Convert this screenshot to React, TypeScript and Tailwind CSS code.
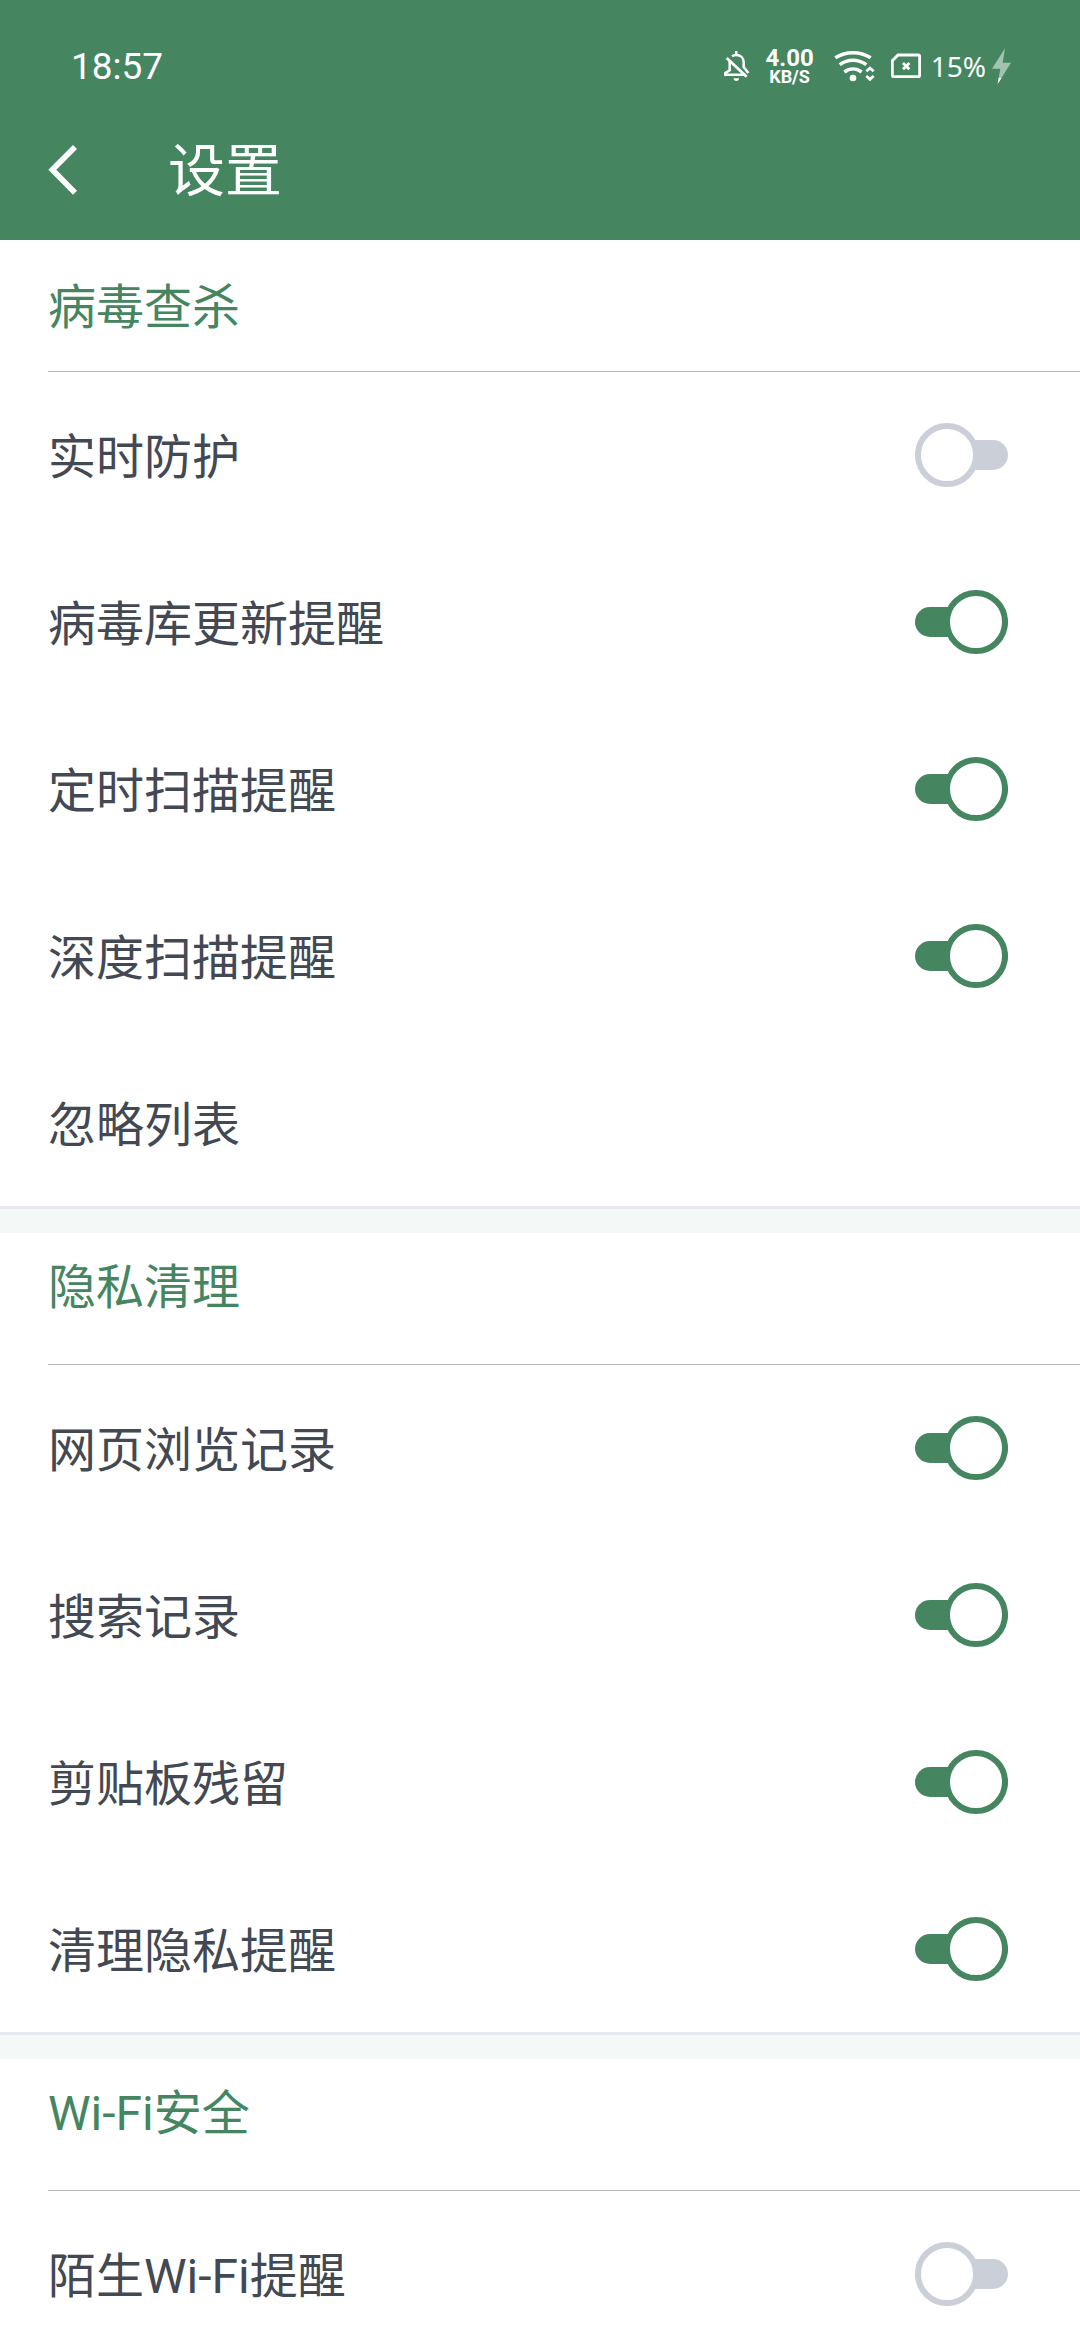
import { useState } from 'react'
import clsx from 'clsx'

type Item = { label: string; on?: boolean }

const sections: { title: string; items: Item[] }[] = [
  {
    title: '病毒查杀',
    items: [
      { label: '实时防护', on: false },
      { label: '病毒库更新提醒', on: true },
      { label: '定时扫描提醒', on: true },
      { label: '深度扫描提醒', on: true },
      { label: '忽略列表' },
    ],
  },
  {
    title: '隐私清理',
    items: [
      { label: '网页浏览记录', on: true },
      { label: '搜索记录', on: true },
      { label: '剪贴板残留', on: true },
      { label: '清理隐私提醒', on: true },
    ],
  },
  {
    title: 'Wi-Fi安全',
    items: [{ label: '陌生Wi-Fi提醒', on: false }],
  },
]

function BellOffIcon() {
  return (
    <svg className="h-8 w-[27px]" viewBox="69 60 81 96" fill="none" stroke="currentColor" strokeWidth="7.5">
      <path d="M109 63v9M96 79c4-3 8-4 13-4 13 0 22 9 22 22v14l14 18" />
      <path d="M80 84l60 56" strokeWidth="8" />
      <path d="M89 92v29l-13 8v5h60" />
      <path d="M101 145h16a8 8 0 0 1-16 0z" fill="currentColor" stroke="none" />
    </svg>
  )
}

function WifiIcon() {
  return (
    <svg className="h-8 w-[41px]" viewBox="399 60 123 96" fill="none" stroke="currentColor" strokeWidth="10.5">
      <path d="M403 83c32-20 74-20 106 0M416 104c25-18 55-18 80 0M430 126c16-12 36-12 52 0" />
      <circle cx="456" cy="144" r="10" fill="currentColor" stroke="none" />
      <path d="M496 124l11-10 11 10M496 138l11 10 11-10" strokeWidth="8" />
    </svg>
  )
}

function SimIcon() {
  return (
    <svg className="h-[26px] w-[30px]" viewBox="567 69 90 78" fill="none" stroke="currentColor" strokeWidth="8.5">
      <path d="M588 75h61a4 4 0 0 1 4 4v57a4 4 0 0 1-4 4h-74a4 4 0 0 1-4-4V92z" />
      <path d="M603 99l19 19M622 99l-19 19" />
    </svg>
  )
}

function BoltIcon() {
  return (
    <svg className="h-9 w-[19px]" viewBox="876 54 57 108" fill="currentColor">
      <path d="M915 55l-39 61h25l-8 46 40-64h-25z" opacity="0.5" />
      <path d="M896 144h8l-11 18z" />
    </svg>
  )
}

function StatusBar() {
  return (
    <div className="flex h-[100px] items-center justify-between pt-8 pr-[69px] pl-[71px]">
      <span className="text-[37px] leading-none">18:57</span>
      <div className="flex items-center">
        <BellOffIcon />
        <div className="ml-[15px] flex flex-col items-center font-bold">
          <span className="text-[24px] leading-[22px]">4.00</span>
          <span className="text-[18px] leading-[16px]">KB/S</span>
        </div>
        <div className="ml-5">
          <WifiIcon />
        </div>
        <div className="ml-4">
          <SimIcon />
        </div>
        <span className="mr-[6px] ml-[10px] font-['Noto_Sans',sans-serif] text-[28px] leading-none">15%</span>
        <BoltIcon />
      </div>
    </div>
  )
}

function Row({ label, on }: Item) {
  const [checked, setChecked] = useState(on)
  const row = 'flex h-[167px] w-full items-center justify-between pr-[72px] pl-12'

  if (on === undefined) {
    return (
      <button className={row}>
        <span className="pt-1">{label}</span>
      </button>
    )
  }

  return (
    <label className={row}>
      <span className="pt-1">{label}</span>
      <input
        type="checkbox"
        role="switch"
        checked={checked}
        onChange={(e) => setChecked(e.target.checked)}
        className={clsx(
          'relative h-[65px] w-[93px] shrink-0 appearance-none',
          'before:absolute before:inset-x-0 before:top-[17px] before:h-[30px] before:rounded-full before:bg-[#cbcfd8]',
          'after:absolute after:top-0 after:left-0 after:size-16 after:rounded-full after:border-6 after:border-[#cbcfd8] after:bg-white',
          'checked:before:bg-[#458661] checked:after:left-[29px] checked:after:border-[#458661]',
        )}
      />
    </label>
  )
}

export default function App() {
  return (
    <div className="bg-white font-['Roboto','Noto_Sans_CJK_SC',sans-serif] text-[48px] leading-[72px] text-[#434953]">
      <header className="bg-[#458661] text-white">
        <StatusBar />
        <div className="flex h-[140px] items-center gap-[90px] pl-12">
          <button aria-label="返回">
            <svg className="h-[52px] w-[30px]" viewBox="144 336 90 156" fill="none" stroke="currentColor" strokeWidth="17">
              <path d="M225 345l-68 68 68 69" />
            </svg>
          </button>
          <h1 className="pt-1 text-[57px]">设置</h1>
        </div>
      </header>

      <main>
        {sections.map(({ title, items }, i) => (
          <section key={title}>
            {i > 0 && <div className="h-[27px] border-t-3 border-[#e6e9ee] bg-[#f4f8f7]" />}
            <div
              className={clsx(
                'ml-12 flex h-[132px] items-center border-b border-[#b6b6b8] text-[#458661]',
                i > 0 ? 'pb-[22px]' : 'pt-1',
              )}
            >
              <h2>{title}</h2>
            </div>
            <ul className="-mb-px">
              {items.map((item) => (
                <li key={item.label}>
                  <Row {...item} />
                </li>
              ))}
            </ul>
          </section>
        ))}
      </main>
    </div>
  )
}
